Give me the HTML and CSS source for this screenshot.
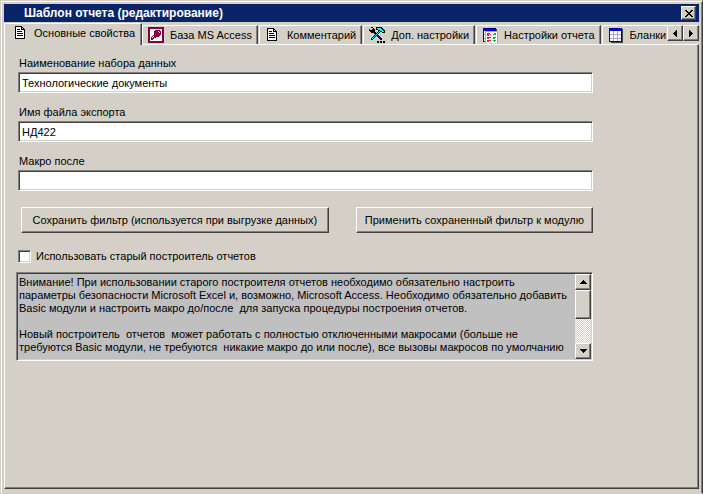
FILE: index.html
```html
<!DOCTYPE html>
<html lang="ru">
<head>
<meta charset="utf-8">
<title>Шаблон отчета (редактирование)</title>
<link rel="stylesheet" href="styles.css">
</head>
<body>
<svg class="symbols" aria-hidden="true">
  <symbol id="doc" viewBox="-1 0 16 16">
    <path fill="#fff" d="M2 2h6v3h3v8H2z"/>
    <path fill="#000" d="M1 1h7v1h1v1h1v1h1v10H1zM2 2v11h8V5H7V2zM8 3v1h1V3z" fill-rule="evenodd"/>
    <path fill="#000" d="M3 4h3v1H3zM3 6h5v1H3zM3 8h6v1H3zM3 10h6v1H3z"/>
  </symbol>
  <symbol id="grid" viewBox="0 0 16 16">
    <path fill="#404040" d="M2 2h13v14H3z"/>
    <path fill="#000080" d="M1 1h13v14H1z"/>
    <path fill="#00f" d="M2 2h11v2H2z"/>
    <path fill="#b0a0d8" d="M2 4h11v10H2z"/>
    <path fill="#fff" d="M2 4h3v3H2zM6 4h3v3H6zM10 4h3v3h-3zM2 8h3v3H2zM6 8h3v3H6zM10 8h3v3h-3zM2 12h3v2H2zM6 12h3v2H6zM10 12h3v2h-3z"/>
  </symbol>
</svg>
<main class="window">
  <header class="titlebar">
    <h1>Шаблон отчета (редактирование)</h1>
    <button class="raised close" type="button" aria-label="Закрыть"><svg width="8" height="7" viewBox="0 0 8 7"><path d="M0 0h2v1h1v1h2V1h1V0h2v1H7v1H6v1H5v1h1v1h1v1h1v1H6V6H5V5H3v1H2v1H0V6h1V5h1V4h1V3H2V2H1V1H0z"/></svg></button>
  </header>
  <nav class="tabrow">
    <div class="tabs" role="tablist">
      <button class="tab selected" type="button" role="tab" aria-selected="true"><svg class="icon"><use href="#doc"/></svg>Основные свойства</button>
      <button class="tab" type="button" role="tab"><svg class="icon" viewBox="0 0 16 16"><path fill="#800040" d="M0 0h16v16H0z"/><path fill="#fff" d="M2 2h12v12H2z"/><path fill="#800040" d="M7 3h5v1h1v4h-1v1h-1v1H8v1H6v1H5v1H3v-3h1V9h1V8h1V4h1z"/><path fill="#fff" d="M10 4h1v1h1v1h-1V5h-1zM4 10h1V9h1v1H5v1H4z"/></svg>База MS Access</button>
      <button class="tab" type="button" role="tab"><svg class="icon"><use href="#doc"/></svg>Комментарий</button>
      <button class="tab" type="button" role="tab"><svg class="icon" viewBox="0 0 16 16"><path fill="#000" d="M2 0h2v1h1v1h1v3h1v1h1v1H7v1H6V7H5V6H2V5H1V4H0V2h1v1h2V2h1V1H2z"/><path fill="#000080" d="M7 7h2v1h1v1h1v1h1v1h1v2h-2v-1h-1v-1H9v-1H8V9H7z"/><path fill="#000" d="M7 0h6v1h1v1h1v1h1v3h-3V5h-2v1h-1v1H9v1H8v1H7v1H6v1H5v1H4v1H2v-2h1v-1h1V9h1V8h1V7h1V6h1V5h1V3H7z"/><path fill="#0ff" d="M8 1h4v1h1v1h1v1h1v1h-2V4h-2V3H9V2H8zM10 4h1v1h-1v1H9v1H8v1H7v1H6v1H5v1H4v1H3v-1h1v-1h1V9h1V8h1V7h1V6h1V5h1z"/><path fill="#000" d="M8 14h2v2H8zM11 14h2v2h-2zM14 14h2v2h-2z"/></svg>Доп. настройки</button>
      <button class="tab" type="button" role="tab"><svg class="icon" viewBox="0 0 16 16"><use href="#grid"/><path fill="#b0a0d8" d="M3 4h13v12H3z"/><path fill="#fff" d="M4 5h11v11H4z"/><path fill="#f02020" d="M5 6h2v3H5zM7 6h1v1H7zM8 7h1v1H8zM5 10h3v1H5zM5 11h2v1H5zM8 10h1v1H8zM5 13h2v2H5zM7 13h2v1H7z"/><path fill="#20a850" d="M11 7h1v1h-1zM12 6h2v2h-2zM11 10h3v1h-3zM11 11h2v1h-2zM11 13h3v1h-3zM12 14h1v1h-1z"/></svg>Настройки отчета</button>
      <button class="tab" type="button" role="tab"><svg class="icon"><use href="#grid"/></svg>Бланки</button>
    </div>
    <div class="spin">
      <button class="raised arrow" type="button" aria-label="Назад"><svg width="4" height="7" viewBox="0 0 4 7"><path d="M3 0h1v7H3V6H2V5H1V4H0V3h1V2h1V1h1z"/></svg></button>
      <button class="raised arrow" type="button" aria-label="Вперёд"><svg width="4" height="7" viewBox="0 0 4 7"><path d="M0 0h1v1h1v1h1v1h1v1H3v1H2v1H1v1H0z"/></svg></button>
    </div>
  </nav>
  <form class="panel">
    <div class="field"><label for="name">Наименование набора данных</label><input class="sunken" id="name" type="text" value="Технологические документы"></div>
    <div class="field"><label for="file">Имя файла экспорта</label><input class="sunken" id="file" type="text" value="НД422"></div>
    <div class="field"><label for="macro">Макро после</label><input class="sunken" id="macro" type="text"></div>
    <div class="actions">
      <button class="raised wide" type="button">Сохранить фильтр (используется при выгрузке данных)</button>
      <button class="raised" type="button">Применить сохраненный фильтр к модулю</button>
    </div>
    <label class="check"><input class="sunken" type="checkbox">Использовать старый построитель отчетов</label>
    <div class="memo sunken">
      <textarea aria-label="Внимание" readonly rows="6">Внимание! При использовании старого построителя отчетов необходимо обязательно настроить
параметры безопасности Microsoft Excel и, возможно, Microsoft Access. Необходимо обязательно добавить
Basic модули и настроить макро до/после  для запуска процедуры построения отчетов.

Новый построитель  отчетов  может работать с полностью отключенными макросами (больше не
требуются Basic модули, не требуются  никакие макро до или после), все вызовы макросов по умолчанию</textarea>
      <div class="scrollbar">
        <button class="raised arrow" type="button" aria-label="Вверх"><svg width="7" height="4" viewBox="0 0 7 4"><path d="M3 0h1v1h1v1h1v1h1v1H0V3h1V2h1V1h1z"/></svg></button>
        <div class="raised thumb"></div>
        <button class="raised arrow down" type="button" aria-label="Вниз"><svg width="7" height="4" viewBox="0 0 7 4"><path d="M0 0h7v1H6v1H5v1H4v1H3V3H2V2H1V1H0z"/></svg></button>
      </div>
    </div>
  </form>
</main>
</body>
</html>
```
FILE: styles.css
```css
* { box-sizing: border-box; }
body {
  margin: 0;
  background: #d4d0c8;
  color: #000;
  font: 11px/13px "Liberation Sans", Arial, sans-serif;
}
button, input, textarea { font: inherit; color: inherit; }
button { background: #d4d0c8; padding: 0; }
svg { shape-rendering: crispEdges; display: block; flex: none; }
.symbols { position: absolute; width: 0; height: 0; }

.raised {
  border: 1px solid;
  border-color: #fff #404040 #404040 #fff;
  box-shadow: inset -1px -1px #808080;
  background: #d4d0c8;
}
.sunken {
  border: 1px solid;
  border-color: #808080 #fff #fff #808080;
  box-shadow: inset 1px 1px #404040, inset -1px -1px #d4d0c8;
  background: #fff;
}

.window {
  min-height: 100vh;
  display: flex;
  flex-direction: column;
  padding: 2px 3px 4px 2px;
  border: 1px solid;
  border-color: #d4d0c8 #404040 #d4d0c8 #d4d0c8;
  box-shadow: inset 1px 1px #fff, inset -1px 0 #808080;
}
.titlebar {
  display: flex;
  align-items: center;
  justify-content: space-between;
  height: 18px;
  margin: 1px 0 0 1px;
  padding: 0 3px 0 20px;
  background: #0a246a;
  color: #fff;
}
h1 { margin: 0; font-size: 12px; line-height: 18px; }
.close { display: grid; place-items: center; width: 15px; height: 14px; }

/* The row overlaps the panel's top edge by one pixel so the selected tab opens into it. */
.tabrow { display: flex; height: 23px; margin: 0 0 -1px 1px; position: relative; z-index: 1; }
.tabs { display: flex; align-items: flex-end; flex: 1; min-width: 0; overflow: hidden; }
.tab {
  display: flex;
  align-items: center;
  flex: none;
  gap: 6px;
  height: 19px;
  padding: 0 5px;
  margin: 0 1px 1px 0;
  border: 1px solid;
  border-color: #fff #404040 transparent #fff;
  border-bottom: 0;
  border-radius: 2px 0 0 0;
  box-shadow: inset -1px 0 #808080;
  white-space: nowrap;
}
.tab.selected { height: 22px; padding: 0 6px 3px 8px; margin: 0; gap: 5px; }
.icon { width: 16px; height: 16px; }
.spin { display: flex; margin-top: 3px; }
.arrow { display: grid; place-items: center; width: 16px; height: 16px; }

.panel {
  flex: 1;
  margin-left: 1px;
  padding: 12px 105px 20px 11px;
  border: 1px solid;
  border-color: #fff #404040 #404040 #fff;
  box-shadow: inset -1px -1px #808080;
}
.field { display: flex; flex-direction: column; gap: 2px; margin: 0 0 13px 2px; }
.field label { line-height: 13px; padding-left: 1px; }
.field input { width: 100%; height: 21px; padding: 0 3px; outline: none; }
.actions { display: flex; gap: 27px; margin: 16px 0 17px 5px; }
.actions button { flex: 237 1 0; height: 26px; white-space: nowrap; }
.actions .wide { flex-grow: 308; }
.check { display: flex; align-items: center; gap: 5px; margin: 0 0 9px 2px; }
.check input { appearance: none; width: 13px; height: 13px; margin: 0; }
.memo { display: flex; background: #c0c0c0; padding: 1px; height: 89px; }
.memo textarea {
  flex: 1;
  min-width: 0;
  padding: 2px 1px;
  border: 0;
  background: none;
  resize: none;
  overflow: hidden;
  white-space: pre;
  outline: none;
}
.scrollbar {
  display: flex;
  flex-direction: column;
  width: 16px;
  background: repeating-conic-gradient(#fff 0 25%, #d4d0c8 0 50%) 0 0 / 2px 2px;
}
.thumb { height: 29px; }
.down { margin-top: auto; }
```
